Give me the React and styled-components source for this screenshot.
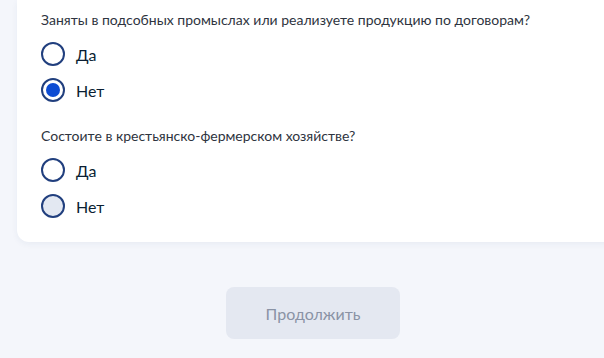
import React from 'react';
import styled, { createGlobalStyle } from 'styled-components';

const GlobalStyle = createGlobalStyle`
  html, body {
    margin: 0;
    padding: 0;
    background: #f4f6fb;
    font-family: Lato, "Noto Sans", sans-serif;
    overflow: hidden;
  }
`;

const Page = styled.div`
  width: 604px;
  height: 358px;
  padding-left: 17px;
  box-sizing: border-box;
  overflow: hidden;
`;

const Card = styled.section`
  background: #fff;
  margin-right: -30px;
  padding: 10px 24px 24px;
  border-radius: 0 0 12px 12px;
  box-shadow: 0 2px 6px rgba(30, 60, 120, 0.06);
`;

const Question = styled.p`
  margin: ${({ first }) => (first ? '0' : '24px 0 0')};
  font-size: 14px;
  line-height: 20px;
  color: #2e3440;
`;

const Options = styled.div`
  display: flex;
  flex-direction: column;
  gap: 12px;
  margin-top: 12px;
`;

const Option = styled.label`
  display: flex;
  align-items: center;
  gap: 11px;
  height: 24px;
  font-size: 16px;
  color: #0b1f33;
`;

const Circle = styled.span`
  width: 24px;
  height: 24px;
  box-sizing: border-box;
  border-radius: 50%;
  border: 2px solid #213f7e;
  background: ${({ muted }) => (muted ? '#e3e8f2' : '#fff')};
  display: flex;
  align-items: center;
  justify-content: center;
  &::after {
    content: '';
    display: ${({ checked }) => (checked ? 'block' : 'none')};
    width: 14px;
    height: 14px;
    border-radius: 50%;
    background: #0d4cd3;
  }
`;

const Footer = styled.div`
  padding: 45px 0 0 209px;
`;

const Button = styled.button`
  width: 174px;
  height: 52px;
  border: none;
  border-radius: 8px;
  background: #e4e8f1;
  color: #8a93a5;
  font-family: Lato, "Noto Sans", sans-serif;
  font-size: 16px;
`;

const questions = [
  {
    text: 'Заняты в подсобных промыслах или реализуете продукцию по договорам?',
    options: [{ label: 'Да' }, { label: 'Нет', checked: true }],
  },
  {
    text: 'Состоите в крестьянско-фермерском хозяйстве?',
    options: [{ label: 'Да' }, { label: 'Нет', muted: true }],
  },
];

export default function App() {
  return (
    <Page>
      <GlobalStyle />
      <Card>
        {questions.map((q, i) => (
          <div key={i}>
            <Question first={i === 0}>{q.text}</Question>
            <Options>
              {q.options.map((o, j) => (
                <Option key={j}>
                  <Circle checked={o.checked} muted={o.muted} />
                  {o.label}
                </Option>
              ))}
            </Options>
          </div>
        ))}
      </Card>
      <Footer>
        <Button disabled>Продолжить</Button>
      </Footer>
    </Page>
  );
}
